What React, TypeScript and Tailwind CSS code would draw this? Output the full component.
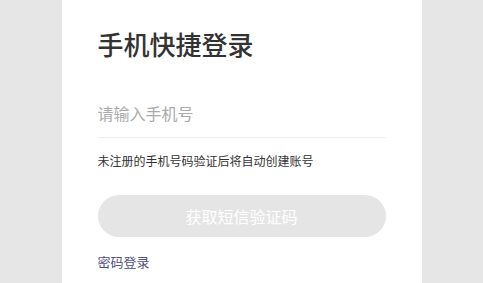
export default function App() {
  return (
    <div
      className="h-screen w-full bg-[#e6e6e6] flex justify-center overflow-hidden"
      style={{ fontFamily: '"Noto Sans CJK SC", "Noto Sans", sans-serif' }}
    >
      <div className="w-[360px] h-full bg-white px-9 pt-[26px] flex flex-col">
        <h1 className="text-[26px] leading-[36px] font-medium text-[#333]">手机快捷登录</h1>

        <input
          type="tel"
          placeholder="请输入手机号"
          className="mt-[26px] h-[50px] w-full border-b border-[#eeeeee] text-base text-[#333] placeholder:text-[#aaaaaa] outline-none bg-transparent"
        />

        <p className="mt-[14px] text-xs leading-[18px] text-[#333]">未注册的手机号码验证后将自动创建账号</p>

        <button className="mt-[25px] h-[42px] w-full rounded-full bg-[#e5e5e5] text-base text-white">
          获取短信验证码
        </button>

        <a className="mt-[15px] text-[13px] leading-5 text-[#50507e]">密码登录</a>
      </div>
    </div>
  )
}
